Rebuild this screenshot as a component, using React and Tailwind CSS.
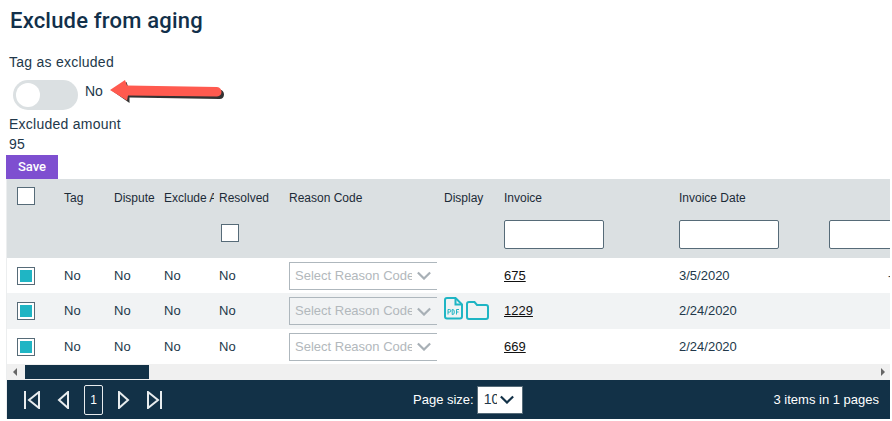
import React from 'react';

const gridCols = 'grid grid-cols-[52px_50px_50px_55px_70px_153px_62px_175px_150px_100px]';

const rows = [
  { invoice: '675', date: '3/5/2020', dash: true, height: 'h-[35px]' },
  { invoice: '1229', date: '2/24/2020', files: true, alt: true, height: 'h-[36px]' },
  { invoice: '669', date: '2/24/2020', height: 'h-[35px]' },
];

const Chevron = ({ className }) => (
  <svg viewBox="0 0 16 10" className={className} fill="none" stroke="currentColor" strokeWidth="2.500">
    <path d="M1 1.500 8 8.500 15 1.500" />
  </svg>
);

const PdfIcon = () => (
  <svg width="19" height="23" viewBox="0 0 19 23" fill="none" className="shrink-0">
    <path d="M3 1h8.500L18 7.500V19.500a2 2 0 0 1-2 2H3a2 2 0 0 1-2-2V3a2 2 0 0 1 2-2Z" stroke="#1fb5c4" strokeWidth="2" />
    <path d="M11.500 1v6.500H18" stroke="#1fb5c4" strokeWidth="2" />
    <path d="M4 17.500v-5h1.500a1.200 1.200 0 0 1 0 2.600H4M8.200 12.500v5h.8a1.800 1.800 0 0 0 1.200-1.500v-2a1.800 1.800 0 0 0-1.200-1.500ZM12.500 17.500v-5h2.500M12.500 15h2" stroke="#1fb5c4" strokeWidth="1" />
  </svg>
);

const FolderIcon = () => (
  <svg width="23" height="19" viewBox="0 0 23 19" fill="none" className="shrink-0">
    <path d="M3 1h5.500l2.500 3h9a2 2 0 0 1 2 2v10a2 2 0 0 1-2 2H3a2 2 0 0 1-2-2V3a2 2 0 0 1 2-2Z" stroke="#1fb5c4" strokeWidth="2" />
  </svg>
);

const PagerIcon = ({ d, width = 18 }) => (
  <svg width={width} height="18" viewBox={`0 0 ${width} 18`} fill="none" stroke="#e8ecee" strokeWidth="2">
    <path d={d} />
  </svg>
);

export default function App() {
  return (
    <div className="w-[892px] h-[421px] overflow-hidden bg-white text-[#22384a] font-['Liberation_Sans',sans-serif]">
      <div className="relative">
        <h1 className="pl-[10px] pt-[7px] h-[40px] text-[22px] leading-[28px] font-medium text-[#12304a] tracking-[0.2px] font-['Roboto',sans-serif]">
          Exclude from aging
        </h1>
        <div className="pl-[9px] mt-[12px] text-[14px] leading-[20px] tracking-[0.25px]">Tag as excluded</div>
        <div className="flex items-center pl-[13px] mt-[8px] h-[30px]">
          <div className="w-[65px] h-[30px] rounded-full bg-[#dbe0e2] flex items-center pl-[3px]">
            <div className="w-[24px] h-[24px] rounded-full bg-white" />
          </div>
          <span className="ml-[7px] text-[14px] -mt-[7px]">No</span>
        </div>
        <div className="pl-[9px] mt-[4px] text-[14px] leading-[20px] tracking-[0.25px]">Excluded amount</div>
        <div className="pl-[9px] text-[14px] leading-[20px] tracking-[0.25px]">95</div>
        <button className="block ml-[6px] mt-[1px] w-[52px] h-[24px] bg-[#7e4fd0] text-white text-[13px] font-medium text-center font-['Roboto',sans-serif]">
          Save
        </button>

        {/* annotation arrow */}
        <svg width="122" height="28" viewBox="0 0 122 28" className="absolute left-[108px] top-[78px]" fill="none">
          <path d="M3 12 17 3 19 9 110 10.500C116 11 116 20 110 20L20 18.500 20 24Z" fill="#333" transform="translate(1.500 1)" className="blur-[0.6px]" />
          <path d="M2 12 17 2 19 7.500 109 9C115 9.500 115 18.500 109 18.500L20 17.500 19 22.500Z" fill="#ff5a4f" />
        </svg>
      </div>

      <div className="ml-[6px] w-[884px] border-l border-[#eceeef] text-[13px]">
        <div className="overflow-hidden">
          <div className="bg-[#dbe0e2] h-[79px] text-[#1c2b38] text-[12px]">
            <div className={gridCols}>
              <div className="pl-[10px] pt-[8px]">
                <div className="w-[18px] h-[18px] bg-white border border-[#566b78]" />
              </div>
              <div className="pl-[5px] pt-[12px] leading-[14px]">Tag</div>
              <div className="pl-[5px] pt-[12px] leading-[14px]">Dispute</div>
              <div className="pl-[5px] pt-[12px] leading-[14px] whitespace-nowrap overflow-hidden pr-[4px]">Exclude Aging</div>
              <div className="pl-[5px] pt-[12px] leading-[14px]">
                Resolved
                <div className="ml-[2px] mt-[19px] w-[18px] h-[18px] bg-white border border-[#566b78]" />
              </div>
              <div className="pl-[5px] pt-[12px] leading-[14px]">Reason Code</div>
              <div className="pl-[7px] pt-[12px] leading-[14px]">Display</div>
              <div className="pl-[5px] pt-[12px] leading-[14px]">
                Invoice
                <div className="mt-[15px] w-[100px] h-[29px] bg-white border border-[#566b78] rounded-[2px]" />
              </div>
              <div className="pl-[5px] pt-[12px] leading-[14px]">
                Invoice Date
                <div className="mt-[15px] w-[100px] h-[29px] bg-white border border-[#566b78] rounded-[2px]" />
              </div>
              <div className="pl-[5px] pt-[41px]">
                <div className="w-[100px] h-[29px] bg-white border border-[#566b78] rounded-[2px]" />
              </div>
            </div>
          </div>

          {rows.map((row) => (
            <div key={row.invoice} className={`${gridCols} ${row.height} items-center ${row.alt ? 'bg-[#f1f3f4]' : 'bg-white'}`}>
              <div className="pl-[10px]">
                <div className="w-[18px] h-[18px] bg-white border border-[#566b78] p-[2px]">
                  <div className="w-full h-full bg-[#1fb5c4]" />
                </div>
              </div>
              <div className="pl-[5px]">No</div>
              <div className="pl-[5px]">No</div>
              <div className="pl-[5px]">No</div>
              <div className="pl-[5px]">No</div>
              <div className="pl-[5px] overflow-hidden">
                <div className="w-[160px] h-[28px] border border-[#aeb7bd] flex items-center pl-[5px] text-[#b2b8bc] text-[13px] whitespace-nowrap">
                  <span className="w-[117px] overflow-hidden">Select Reason Code</span>
                  <Chevron className="w-[14px] h-[9px] ml-[5px] text-[#a8b0b6]" />
                </div>
              </div>
              <div className="pl-[7px] self-stretch pb-[9px] flex items-end gap-[3px] whitespace-nowrap">
                {row.files && (
                  <>
                    <PdfIcon />
                    <FolderIcon />
                  </>
                )}
              </div>
              <div className="pl-[5px] underline text-[#111]">{row.invoice}</div>
              <div className="pl-[5px]">{row.date}</div>
              <div className="pl-[64px]">{row.dash ? '-' : null}</div>
            </div>
          ))}
        </div>

        <div className="h-[16px] bg-[#f0f0f0] flex items-center">
          <span className="w-0 h-0 ml-[6px] border-y-[4px] border-y-transparent border-r-[4px] border-r-[#666]" />
          <div className="ml-[8px] w-[124px] h-[14px] bg-[#123147]" />
          <span className="w-0 h-0 ml-auto mr-[5px] border-y-[4px] border-y-transparent border-l-[4px] border-l-[#666]" />
        </div>

        <div className="h-[39px] bg-[#123147] flex items-center text-white text-[13px]">
          <div className="flex items-center pl-[16px]">
            <PagerIcon width={18} d="M2 0v18M16 1 6 9l10 8Z" />
            <div className="ml-[16px]"><PagerIcon width={12} d="M11 1 2 9l9 8Z" /></div>
            <div className="ml-[15px] w-[19px] h-[30px] border border-[#e8ecee] rounded-[2px] flex items-center justify-center text-[12px]">1</div>
            <div className="ml-[14px]"><PagerIcon width={13} d="M2 1l9 8-9 8Z" /></div>
            <div className="ml-[16px]"><PagerIcon width={17} d="M2 1l10 8-10 8ZM15 0v18" /></div>
          </div>
          <div className="ml-[250px] flex items-center">
            <span className="whitespace-nowrap">Page size:</span>
            <div className="ml-[3px] w-[46px] h-[28px] bg-white border border-[#566b78] flex items-center pl-[6px] text-[#22384a] text-[14px]">
              <span className="w-[13px] overflow-hidden">10</span>
              <Chevron className="w-[14px] h-[9px] ml-[3px] text-[#123147]" />
            </div>
          </div>
          <span className="ml-auto mr-[11px] whitespace-nowrap">3 items in 1 pages</span>
        </div>
      </div>
    </div>
  );
}
